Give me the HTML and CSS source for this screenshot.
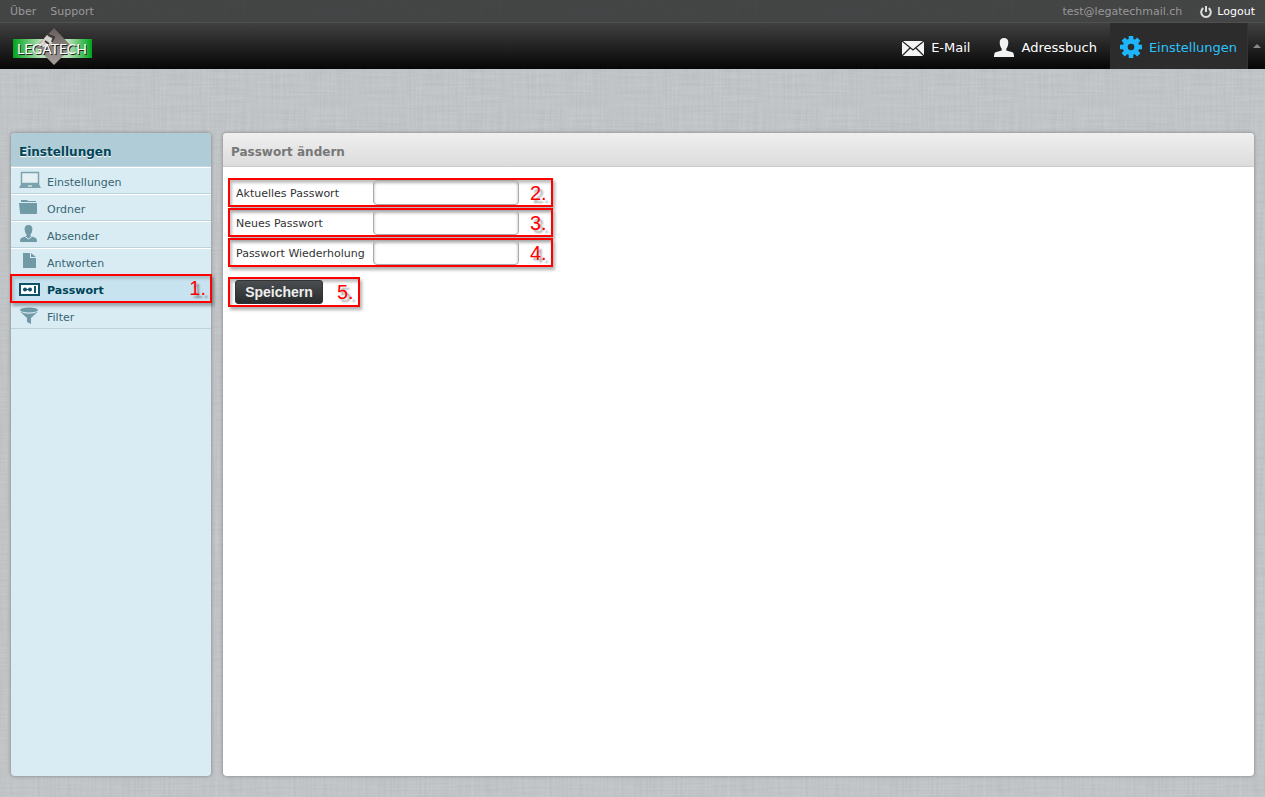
FILE: index.html
```html
<!DOCTYPE html>
<html lang="de">

	<head>
		<meta charset="utf-8">
		<title>Passwort ändern</title>
		<link rel="stylesheet" href="styles.css">
	</head>

	<body>
		<div class="topline">
			<div class="topleft">
				<a href="#">Über</a>
				<a href="#">Support</a>
			</div>
			<div class="topright">
				<span class="username">test@legatechmail.ch</span>
				<a href="#" class="logout">
					<svg width="12" height="12" viewBox="0 0 12 12" fill="none" stroke="#ddd" stroke-width="2"><path d="M3.3 2.2A4.8 4.8 0 1 0 8.7 2.2M6 0V6" /></svg>
					Logout
				</a>
			</div>
		</div>

		<div class="topnav">
			<a href="#" class="logo">
				<svg width="80" height="40" viewBox="0 0 80 40" role="img" aria-label="Legatech">
					<defs>
						<linearGradient id="green">
							<stop offset="0" stop-color="#00a51c" />
							<stop offset=".35" stop-color="#b5dfb5" />
							<stop offset=".7" stop-color="#b5dfb5" />
							<stop offset="1" stop-color="#00a51c" />
						</linearGradient>
						<linearGradient id="stone" x1="0" y1="0" x2="0" y2="1">
							<stop offset="0" stop-color="#675e5b" />
							<stop offset="1" stop-color="#a8a09c" />
						</linearGradient>
					</defs>
					<path d="M0 11H79V30H0z" fill="url(#green)" />
					<path d="M41 0L59 19L41 37L23 19z" fill="url(#stone)" />
					<path d="M34 7L41 12L36 19L24 19z" fill="#d8d2ce" />
					<path d="M35 7L41 9L39 14M32 13L36 16" stroke="#3c3634" stroke-width="2" fill="none" />
					<text class="logo-shade" x="5" y="27">LEGATECH</text>
					<text class="logo-text" x="4" y="26">LEGATECH</text>
				</svg>
			</a>
			<div class="taskbar">
				<a href="#" class="task">
					<svg width="22" height="15" viewBox="0 0 22 15"><path d="M0 0H22V15H0z" fill="#f4f4f4" /><path d="M0 0L11 9L22 0M0 15L8 7M22 15L14 7" stroke="#222" stroke-width="1.3" fill="none" /></svg>
					E-Mail
				</a>
				<a href="#" class="task">
					<svg class="raised" width="20" height="19" viewBox="0 0 20 19" fill="#f1f1f1"><path d="M10 0C12.800 0 14.300 1.700 14.300 4.200C14.300 7 13.500 9.300 12.300 10.700V12.400L18.500 14.300Q20 15 20 19H0Q0 15 1.500 14.300L7.700 12.400V10.700C6.500 9.300 5.700 7 5.700 4.200C5.700 1.700 7.200 0 10 0z" /></svg>
					Adressbuch
				</a>
				<a href="#" class="task selected">
					<svg class="raised" width="22" height="22" viewBox="-11 -11 22 22">
						<g fill="none" stroke="#1eb5fa"><circle r="5.800" stroke-width="5" /><path stroke-width="4.600" d="M0 -7V-11M0 7V11M-7 0H-11M7 0H11M5 -5L7.800 -7.800M-5 5L-7.800 7.800M-5 -5L-7.800 -7.800M5 5L7.800 7.800" /></g>
					</svg>
					Einstellungen
				</a>
				<button class="minmode" aria-label="Leiste minimieren"></button>
			</div>
		</div>

		<div class="main">
			<div class="box sidebar">
				<h2>Einstellungen</h2>
				<ul class="sections">
					<li><a href="#">
						<svg width="22" height="18" viewBox="0 0 22 18"><path d="M2.500 1.500H19.500V12.500H2.500z" fill="#e4f0f4" stroke="#7ba3ae" stroke-width="1.500" /><path d="M2 13H20L22 17H0z" fill="#7ba3ae" /><path d="M9 15H13" stroke="#fff" /></svg>
						Einstellungen
					</a></li>
					<li><a href="#">
						<svg width="22" height="18" viewBox="0 0 22 18" fill="#6f9aa6"><path d="M2 3V2H8L9 3H17V4H2zM0 5H18V15Q18 16 17 16H2Q1 16 1 15z" /></svg>
						Ordner
					</a></li>
					<li><a href="#">
						<svg width="22" height="18" viewBox="0 0 22 18" fill="#6f9aa6"><path d="M9.500 0C12.500 0 13.800 2 13.300 5C13 7.500 12.500 8.500 11.500 9.500V11L17 13Q18 14 18 17H1Q1 14 2 13L7.500 11V9.500C6.500 8.500 6 7.500 5.700 5C5.200 2 6.500 0 9.500 0z" /><path d="M6 11.500L9.500 14L13 11.500" stroke="#d9ecf4" fill="none" /></svg>
						Absender
					</a></li>
					<li><a href="#">
						<svg width="22" height="18" viewBox="0 0 22 18" fill="#6f9aa6"><path d="M4 1H11V6H17V16H4zM12 1L17 5H12z" /></svg>
						Antworten
					</a></li>
					<li class="selected"><a href="#">
						<svg width="22" height="18" viewBox="0 0 22 18" fill="#0d5266"><path d="M1 5H20V16H1z" fill="#fff" stroke="#0d5266" stroke-width="2" /><circle cx="6" cy="10.500" r="2" /><circle cx="11" cy="10.500" r="2" /><path d="M4 10H13V11H4zM15 7H17V14H15z" /></svg>
						Passwort
					</a></li>
					<li><a href="#">
						<svg width="22" height="18" viewBox="0 0 22 18" fill="#6f9aa6"><ellipse cx="10" cy="4" rx="9" ry="2.500" /><path d="M1 5.500Q10 10 19 5.500L12 12V18L8 16V12z" /></svg>
						Filter
					</a></li>
				</ul>
				<span class="mark mark-nav">1.</span>
			</div>

			<div class="box content">
				<h1>Passwort ändern</h1>
				<form class="form">
					<div class="field">
						<label for="curpasswd">Aktuelles Passwort</label>
						<input type="password" id="curpasswd">
						<span class="num">2.</span>
					</div>
					<div class="field">
						<label for="newpasswd">Neues Passwort</label>
						<input type="password" id="newpasswd">
						<span class="num">3.</span>
					</div>
					<div class="field">
						<label for="confpasswd">Passwort Wiederholung</label>
						<input type="password" id="confpasswd">
						<span class="num">4.</span>
					</div>
					<div class="submit">
						<button type="button">Speichern</button>
						<span class="num">5.</span>
					</div>
				</form>
			</div>
		</div>
	</body>

</html>
```
FILE: styles.css
```css
* {
	box-sizing: border-box;
}

body {
	margin: 0;
	min-height: 100vh;
	display: flex;
	flex-direction: column;
	font: 11px/16px Verdana, "DejaVu Sans", sans-serif;
	color: #333;
	background-color: #c6cacd;
	/* linen: horizontal and vertical threads */
	background-image: url("data:image/svg+xml,%3Csvg xmlns='http://www.w3.org/2000/svg' width='256' height='256'%3E%3Cfilter id='h' x='0' y='0' width='1' height='1'%3E%3CfeTurbulence type='fractalNoise' baseFrequency='.02 .5' numOctaves='2' stitchTiles='stitch'/%3E%3CfeColorMatrix values='0 0 0 0 .2 0 0 0 0 .2 0 0 0 0 .2 .16 0 0 0 -.04'/%3E%3C/filter%3E%3Cfilter id='v' x='0' y='0' width='1' height='1'%3E%3CfeTurbulence type='fractalNoise' baseFrequency='.5 .02' numOctaves='2' stitchTiles='stitch'/%3E%3CfeColorMatrix values='0 0 0 0 .2 0 0 0 0 .2 0 0 0 0 .2 .16 0 0 0 -.04'/%3E%3C/filter%3E%3Crect width='256' height='256' filter='url(%23h)'/%3E%3Crect width='256' height='256' filter='url(%23v)'/%3E%3C/svg%3E");
}

a {
	color: inherit;
	text-decoration: none;
}

svg {
	display: block;
	flex: none;
}

/* top bars */
.topline {
	height: 23px;
	padding: 2px 10px 0;
	display: flex;
	justify-content: space-between;
	align-items: center;
	color: #999;
	background-color: rgba(30, 30, 30, .77);
	border-bottom: 1px solid #505050;
}

.topleft,
.topright {
	display: flex;
	align-items: center;
	gap: 14px;
}

.topright {
	gap: 18px;
}

.logout {
	display: flex;
	align-items: center;
	gap: 5px;
	color: #fff;
}

.topnav {
	height: 46px;
	padding-left: 13px;
	display: flex;
	justify-content: space-between;
	background: linear-gradient(#404040, #060606);
}

.logo {
	padding-top: 5px;
}

.logo-text,
.logo-shade {
	font: 14px Lato, sans-serif;
	fill: #fff;
}

.logo-shade {
	fill: #222;
}

.taskbar {
	display: flex;
	font-size: 13px;
	color: #fff;
}

.task {
	display: flex;
	align-items: center;
	gap: 7px;
	padding: 4px 10px 0 14px;
}

.task .raised {
	margin-bottom: 2px;
}

.task.selected {
	padding: 4px 10px 0;
	margin-left: 3px;
	color: #2ac3ff;
	background: #2c2c2c;
}

.minmode {
	display: flex;
	align-items: center;
	justify-content: center;
	width: 18px;
	padding: 0;
	border: 0;
	border-left: 1px solid #333;
	background: none;
}

.minmode::before {
	content: "";
	border: 4px solid transparent;
	border-top: 0;
	border-bottom-color: #888;
}

/* panels */
.main {
	flex: 1;
	display: flex;
	gap: 12px;
	padding: 64px 11px 21px;
}

.box {
	border-radius: 4px;
	box-shadow: 0 0 3px 1px #999;
}

.box h1,
.box h2 {
	margin: 0;
	height: 34px;
	padding: 2px 8px 0;
	font-size: 12px;
	line-height: 34px;
	border-radius: 4px 4px 0 0;
}

.sidebar {
	position: relative;
	width: 200px;
	flex: none;
	background: #d9ecf4;
}

.sidebar h2 {
	color: #004458;
	background: #b0ccd7;
	border-bottom: 1px solid #bfd7e1;
	text-shadow: 0 1px 1px #fff;
}

.sections {
	margin: 0;
	padding: 0;
	list-style: none;
}

.sections a {
	display: flex;
	align-items: center;
	gap: 6px;
	height: 27px;
	padding: 4px 8px 0;
	color: #376572;
	border-top: 1px solid #fff;
	border-bottom: 1px solid #bbd3da;
}

.sections svg {
	margin-top: -6px;
}

.sections .selected a {
	color: #004458;
	font-weight: bold;
	background: #c7e3ef;
}

.content {
	flex: 1;
	background: #fff;
}

.content h1 {
	color: #777;
	background: linear-gradient(#efefef, #dcdcdc);
	border-bottom: 1px solid #ccc;
}

.form {
	display: flex;
	flex-direction: column;
	align-items: flex-start;
	gap: 1px;
	padding: 11px 5px;
}

.field,
.submit {
	display: flex;
	align-items: center;
	border: 2px solid #f00;
	box-shadow: 2px 3px 3px rgba(0, 0, 0, .3), inset 2px 3px 3px rgba(0, 0, 0, .25);
}

.field {
	width: 325px;
	height: 29px;
	padding: 0 6px;
}

.field label {
	flex: none;
	width: 137px;
	padding-top: 2px;
	white-space: nowrap;
}

.field input {
	flex: none;
	width: 146px;
	height: 25px;
	border: 1px solid #aaa;
	border-radius: 4px;
	background: #fff;
	box-shadow: inset 0 2px 3px rgba(0, 0, 0, .3);
}

.field .num {
	margin-left: 11px;
}

.submit {
	width: 132px;
	height: 30px;
	margin-top: 9px;
	padding: 0 5px;
}

.submit button {
	flex: none;
	width: 88px;
	height: 24px;
	padding: 0;
	font: bold 14px "Liberation Sans", Arial, sans-serif;
	color: #eee;
	border: 1px solid #333;
	border-radius: 3px;
	background: linear-gradient(#4a4e50, #292d2e);
}

.submit .num {
	margin-left: 14px;
}

/* numbered marks */
.num,
.mark {
	font: 20px/24px "Liberation Sans", Arial, sans-serif;
	color: #f00;
	text-shadow: 3px 3px 2px rgba(0, 0, 0, .35);
}

.mark-nav {
	position: absolute;
	top: 141px;
	left: -1px;
	width: 202px;
	height: 29px;
	padding-right: 4px;
	text-align: right;
	border: 2px solid #f00;
	box-shadow: 2px 3px 3px rgba(0, 0, 0, .3), inset 2px 3px 3px rgba(0, 0, 0, .15);
	pointer-events: none;
}
```
